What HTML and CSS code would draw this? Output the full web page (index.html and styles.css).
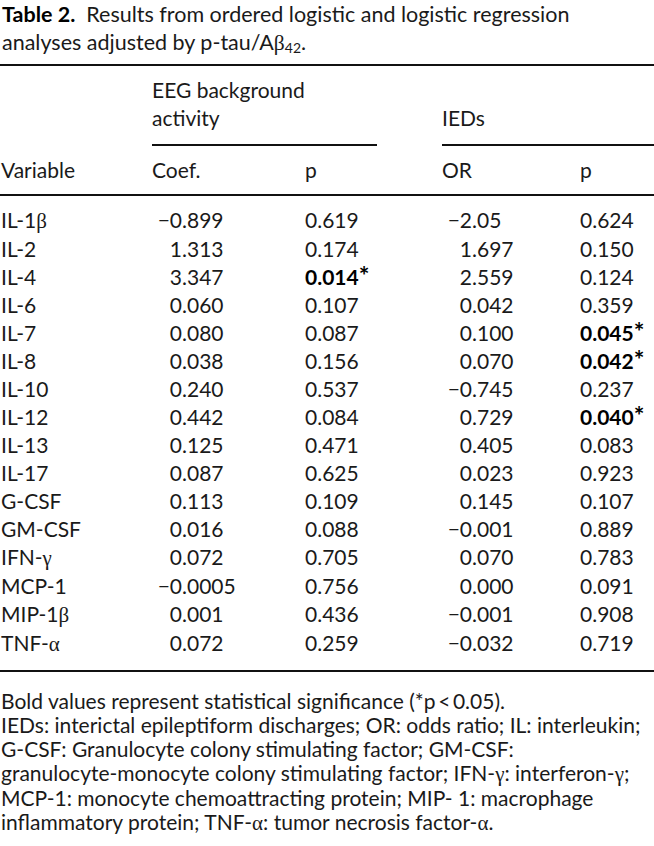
FILE: index.html
```html
<!DOCTYPE html>
<html lang="en">
<head>
<meta charset="utf-8">
<title>Table 2</title>
<link rel="stylesheet" href="styles.css">
</head>
<body>
<div class="page">
  <p class="caption"><b>Table 2.</b>&nbsp; Results from ordered logistic and logistic regression analyses adjusted by p-tau/A<span class="gr">β</span><sub>42</sub>.</p>
  <table class="results">
    <colgroup>
      <col class="c-var"><col class="c-coef"><col class="c-p1"><col class="c-or"><col class="c-p2">
    </colgroup>
    <thead>
      <tr class="group">
        <th></th>
        <th colspan="2"><div class="grp grp-eeg">EEG background<br>activity</div></th>
        <th colspan="2"><div class="grp grp-ied">IEDs</div></th>
      </tr>
      <tr class="sub">
        <th>Variable</th>
        <th>Coef.</th>
        <th>p</th>
        <th>OR</th>
        <th>p</th>
      </tr>
    </thead>
    <tbody>
      <tr><td>IL-1<span class="gr">β</span></td><td class="n"><span class="i">−0</span>.899</td><td>0.619</td><td class="n"><span class="i">−2</span>.05</td><td>0.624</td></tr>
      <tr><td>IL-2</td><td class="n"><span class="i">1</span>.313</td><td>0.174</td><td class="n"><span class="i">1</span>.697</td><td>0.150</td></tr>
      <tr><td>IL-4</td><td class="n"><span class="i">3</span>.347</td><td><b>0.014<span class="ast">*</span></b></td><td class="n"><span class="i">2</span>.559</td><td>0.124</td></tr>
      <tr><td>IL-6</td><td class="n"><span class="i">0</span>.060</td><td>0.107</td><td class="n"><span class="i">0</span>.042</td><td>0.359</td></tr>
      <tr><td>IL-7</td><td class="n"><span class="i">0</span>.080</td><td>0.087</td><td class="n"><span class="i">0</span>.100</td><td><b>0.045<span class="ast">*</span></b></td></tr>
      <tr><td>IL-8</td><td class="n"><span class="i">0</span>.038</td><td>0.156</td><td class="n"><span class="i">0</span>.070</td><td><b>0.042<span class="ast">*</span></b></td></tr>
      <tr><td>IL-10</td><td class="n"><span class="i">0</span>.240</td><td>0.537</td><td class="n"><span class="i">−0</span>.745</td><td>0.237</td></tr>
      <tr><td>IL-12</td><td class="n"><span class="i">0</span>.442</td><td>0.084</td><td class="n"><span class="i">0</span>.729</td><td><b>0.040<span class="ast">*</span></b></td></tr>
      <tr><td>IL-13</td><td class="n"><span class="i">0</span>.125</td><td>0.471</td><td class="n"><span class="i">0</span>.405</td><td>0.083</td></tr>
      <tr><td>IL-17</td><td class="n"><span class="i">0</span>.087</td><td>0.625</td><td class="n"><span class="i">0</span>.023</td><td>0.923</td></tr>
      <tr><td>G-CSF</td><td class="n"><span class="i">0</span>.113</td><td>0.109</td><td class="n"><span class="i">0</span>.145</td><td>0.107</td></tr>
      <tr><td>GM-CSF</td><td class="n"><span class="i">0</span>.016</td><td>0.088</td><td class="n"><span class="i">−0</span>.001</td><td>0.889</td></tr>
      <tr><td>IFN-<span class="gr">γ</span></td><td class="n"><span class="i">0</span>.072</td><td>0.705</td><td class="n"><span class="i">0</span>.070</td><td>0.783</td></tr>
      <tr><td>MCP-1</td><td class="n"><span class="i">−0</span>.0005</td><td>0.756</td><td class="n"><span class="i">0</span>.000</td><td>0.091</td></tr>
      <tr><td>MIP-1<span class="gr">β</span></td><td class="n"><span class="i">0</span>.001</td><td>0.436</td><td class="n"><span class="i">−0</span>.001</td><td>0.908</td></tr>
      <tr><td>TNF-<span class="gr">α</span></td><td class="n"><span class="i">0</span>.072</td><td>0.259</td><td class="n"><span class="i">−0</span>.032</td><td>0.719</td></tr>
    </tbody>
  </table>
  <p class="notes">Bold values represent statistical significance (*p&thinsp;&lt;&thinsp;0.05).<br>IEDs: interictal epileptiform discharges; OR: odds ratio; IL: interleukin;<br>G-CSF: Granulocyte colony stimulating factor; GM-CSF:<br>granulocyte-monocyte colony stimulating factor; IFN-<span class="gr">γ</span>: interferon-<span class="gr">γ</span>;<br>MCP-1: monocyte chemoattracting protein; MIP- 1: macrophage<br>inflammatory protein; TNF-<span class="gr">α</span>: tumor necrosis factor-<span class="gr">α</span>.</p>
</div>
</body>
</html>
```

FILE: styles.css
```css
html, body {
  margin: 0;
  padding: 0;
  background: #ffffff;
}

.page {
  width: 654px;
  font-family: "Lato", "Liberation Sans", sans-serif;
  font-size: 21px;
  color: #1a1a1a;
}

.gr {
  font-family: "Liberation Serif", "DejaVu Serif", serif;
}

.caption {
  margin: 0;
  padding-left: 2px;
  font-size: 21.5px;
  line-height: 28px;
}

.caption b {
  font-weight: 700;
  color: #000;
}

.caption sub {
  font-size: 14px;
  line-height: 0;
  vertical-align: -3px;
}

.results {
  width: 654px;
  margin-top: 7px;
  border-collapse: collapse;
  table-layout: fixed;
  border-top: 2px solid #111;
  border-bottom: 2px solid #111;
}

.c-var { width: 152px; }
.c-coef { width: 153px; }
.c-p1 { width: 137px; }
.c-or { width: 138px; }
.c-p2 { width: 74px; }

.results th,
.results td {
  padding: 0;
  text-align: left;
  font-weight: 400;
  line-height: 28px;
  white-space: nowrap;
  vertical-align: top;
}

.results th:first-child,
.results td:first-child {
  padding-left: 1px;
}

.group th {
  padding-top: 10px;
}

.grp {
  padding-bottom: 12px;
  border-bottom: 2px solid #111;
}

.grp-eeg {
  width: 225px;
}

.grp-ied {
  padding-top: 28px;
}

.sub th {
  padding-top: 10px;
  padding-bottom: 10px;
  border-bottom: 2px solid #111;
}

.results tbody tr:first-child td {
  padding-top: 10px;
}

.results tbody tr:last-child td {
  padding-bottom: 12px;
}

.n .i {
  display: inline-block;
  width: 30px;
  text-align: right;
}

.results b {
  font-weight: 700;
  color: #000;
}

.ast {
  font-size: 1.2em;
  line-height: 0;
}

.notes {
  margin: 17px 0 0;
  padding-left: 1px;
  font-size: 21px;
  line-height: 24px;
}
```
